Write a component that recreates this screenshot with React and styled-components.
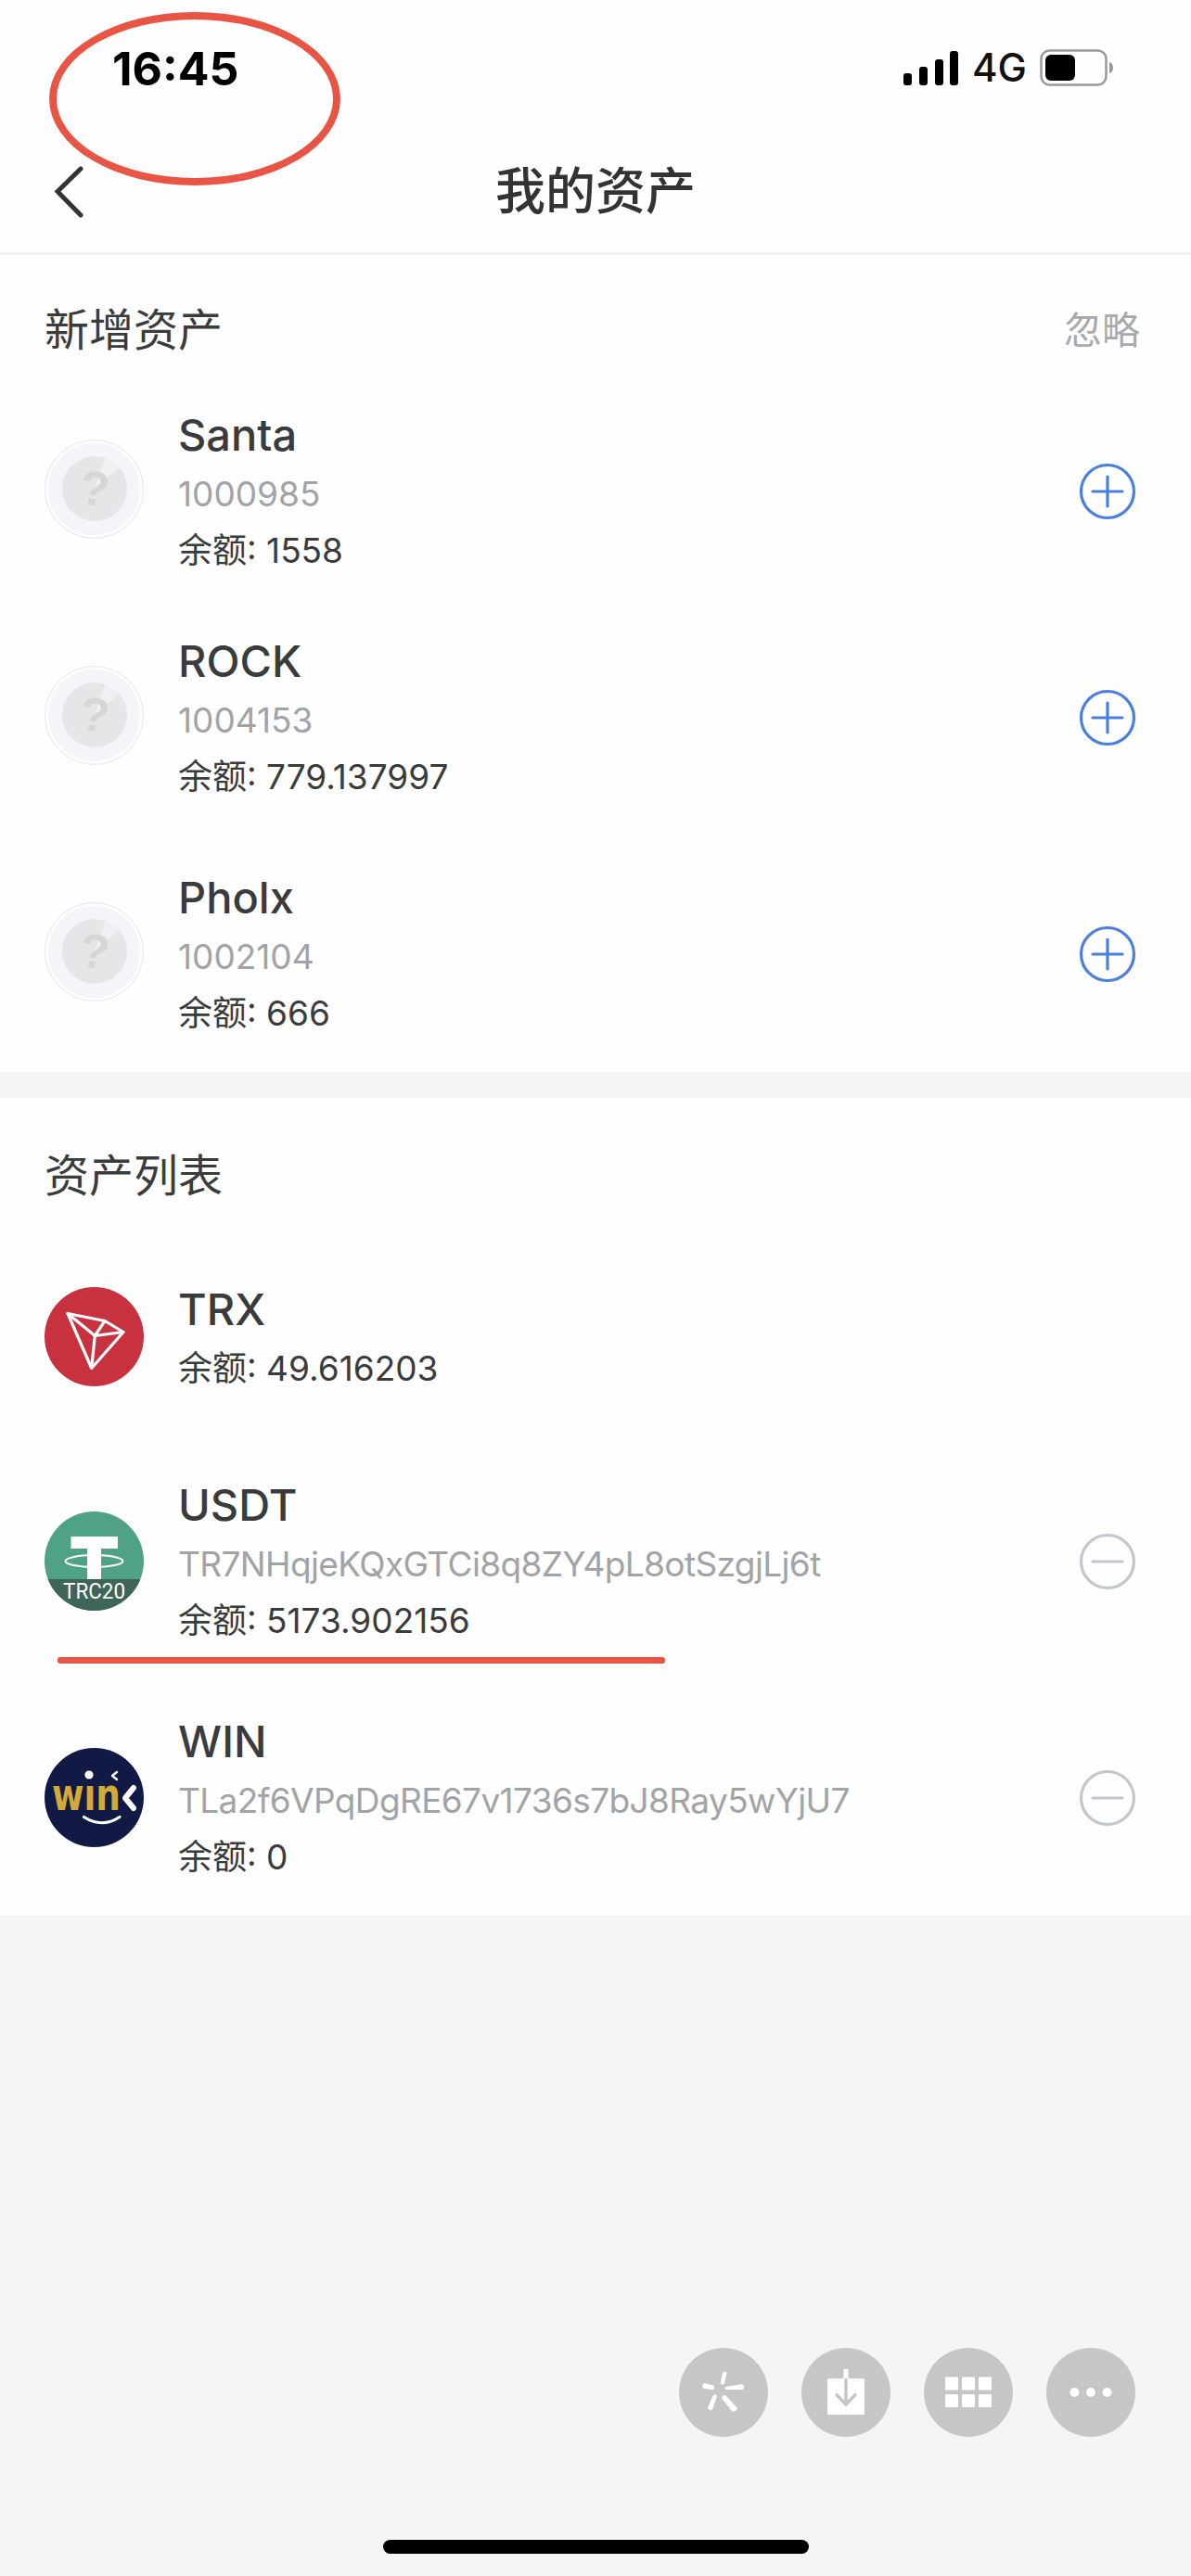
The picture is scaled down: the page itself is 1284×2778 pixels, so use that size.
import styled, { createGlobalStyle } from "styled-components";

const colors = {
  page: "#f5f5f5",
  panel: "#fefefe",
  text: "#3a3b3d",
  muted: "#a2a3a7",
  blue: "#4a7fe0",
  grey: "#c3c7cc",
  mark: "#e85545",
  fab: "#c6c6c6",
};

const GlobalStyle = createGlobalStyle`
  html, body {
    margin: 0;
    padding: 0;
    background: ${colors.page};
  }
  body {
    font-family: Inter, "Noto Sans CJK SC", sans-serif;
  }
`;

const newAssets = [
  { name: "Santa", id: "1000985", balance: "1558", gap: 0 },
  { name: "ROCK", id: "1004153", balance: "779.137997", gap: 64 },
  { name: "Pholx", id: "1002104", balance: "666", gap: 75 },
];

const PlusIcon = () => (
  <svg width="62" height="62" viewBox="0 0 62 62">
    <circle cx="31" cy="31" r="28.5" fill="none" stroke={colors.blue} strokeWidth="3.2" />
    <path d="M15 31H47M31 15V47" stroke={colors.blue} strokeWidth="3.2" strokeLinecap="round" />
  </svg>
);

const MinusIcon = () => (
  <svg width="62" height="62" viewBox="0 0 62 62">
    <circle cx="31" cy="31" r="28.5" fill="none" stroke={colors.grey} strokeWidth="3.2" />
    <path d="M15 31H47" stroke={colors.grey} strokeWidth="3.2" strokeLinecap="round" />
  </svg>
);

const UnknownToken = () => (
  <UnknownOuter>
    <UnknownInner>
      <UnknownMark>?</UnknownMark>
    </UnknownInner>
  </UnknownOuter>
);

const TrxLogo = () => (
  <svg width="107" height="107" viewBox="0 0 107 107">
    <circle cx="53.5" cy="53.5" r="53.5" fill="#c8323f" />
    <g fill="none" stroke="#fff" strokeWidth="3.2" strokeLinejoin="round" strokeLinecap="round">
      <path d="M25 28.5L65 36.5L85 48.5L50.7 87.5Z" />
      <path d="M25 28.5L54.3 52.5L50.7 87.5" />
      <path d="M54.3 52.5L65 36.5M54.3 52.5L85 48.5" />
    </g>
  </svg>
);

const UsdtLogo = () => (
  <svg width="107" height="107" viewBox="0 0 107 107">
    <defs>
      <clipPath id="usdt-disc">
        <circle cx="53.5" cy="53.5" r="53.5" />
      </clipPath>
    </defs>
    <g clipPath="url(#usdt-disc)">
      <rect width="107" height="107" fill="#4fa283" />
      <path d="M28.5 27H79V40H61V73H46V40H28.5Z" fill="#fff" />
      <ellipse cx="53.5" cy="53.5" rx="31" ry="6.5" fill="none" stroke="#fff" strokeWidth="2" />
      <rect y="73" width="107" height="34" fill="#3f6558" />
    </g>
    <text
      x="53.5"
      y="93.5"
      fill="#fff"
      fontFamily="Roboto, sans-serif"
      fontSize="24"
      textAnchor="middle"
      textLength="67"
      lengthAdjust="spacingAndGlyphs"
    >
      TRC20
    </text>
  </svg>
);

const WinLogo = () => (
  <svg width="107" height="107" viewBox="0 0 107 107">
    <circle cx="53.5" cy="53.5" r="53.5" fill="#111a44" />
    <text
      x="8"
      y="66.5"
      fill="#d3a93c"
      fontFamily="'DejaVu Sans', sans-serif"
      fontWeight="700"
      fontSize="48"
      textLength="74"
      lengthAdjust="spacingAndGlyphs"
    >
      wın
    </text>
    <circle cx="48" cy="29" r="4.6" fill="#fff" />
    <g fill="none" stroke="#fff" strokeLinecap="round" strokeLinejoin="round">
      <path d="M78 26L73 30L78 34" strokeWidth="2.4" />
      <path d="M96 43L87 54L96 65" strokeWidth="6" />
      <path d="M42.5 74.5Q62 87 81 74.5" strokeWidth="3.2" />
    </g>
  </svg>
);

const SparkIcon = () => (
  <svg width="56" height="56" viewBox="-28 -28 56 56">
    <g fill="#fff">
      <path d="M-3.2 -9.5L-1 -21Q1 -24 3.6 -21L1 -9.5Q-1 -7.5 -3.2 -9.5Z" />
      <path d="M2 -6L20 -9Q24 -6 20.5 -3L3 -3Q0.5 -4.5 2 -6Z" />
      <path d="M-21 -10Q-24 -6.5 -21 -4L-11 -2.8Q-8.5 -5 -11 -7.5Z" />
      <path d="M-8.5 2Q-11 2 -11.5 4L-17 16Q-16 20.5 -12 18.5L-7 4Q-7 2.5 -8.5 2Z" />
      <path d="M-0.5 3.5Q-2.5 5 -1.5 7L9.5 20.5Q14 21 15 17L2.5 3.5Q1 2.5 -0.5 3.5Z" />
    </g>
  </svg>
);

const InboxIcon = () => (
  <svg width="56" height="56" viewBox="-28 -28 56 56">
    <rect x="-20" y="-15" width="40" height="39" rx="1.5" fill="#fff" />
    <rect x="-2.5" y="-25" width="5" height="10" fill="#fff" />
    <path d="M0 -15V12M-11 1.5L0 13L11 1.5" fill="none" stroke={colors.fab} strokeWidth="3.4" />
  </svg>
);

const GridIcon = () => (
  <svg width="56" height="56" viewBox="-28 -28 56 56" fill="#fff">
    {[-25, -7, 11].map((x) =>
      [-16.5, 2].map((y) => <rect key={`${x}${y}`} x={x} y={y} width="14" height="14" rx="0.8" />)
    )}
  </svg>
);

const DotsIcon = () => (
  <svg width="56" height="56" viewBox="-28 -28 56 56" fill="#fff">
    <circle cx="-17.5" r="5" />
    <circle r="5" />
    <circle cx="17.5" r="5" />
  </svg>
);

const AssetRow = ({ gap = 0, lift = 6, logo, name, id, balance, action, address }) => (
  <Row $gap={gap}>
    <LogoSlot $lift={lift}>{logo}</LogoSlot>
    <RowText>
      <AssetName>{name}</AssetName>
      {id && <AssetId $address={address}>{id}</AssetId>}
      <AssetBalance>余额: {balance}</AssetBalance>
    </RowText>
    {action && <ActionSlot>{action}</ActionSlot>}
  </Row>
);

const App = () => (
  <Screen>
    <GlobalStyle />
    <StatusBar>
      <Clock>16:45</Clock>
      <StatusRight>
        <svg width="60" height="37" viewBox="0 0 60 37" fill="#000">
          <rect x="0" y="24" width="9" height="13" rx="3" />
          <rect x="17" y="17" width="9" height="20" rx="3" />
          <rect x="34" y="9" width="9" height="28" rx="3" />
          <rect x="50" y="0" width="9" height="37" rx="3" />
        </svg>
        <Network>4G</Network>
        <svg width="80" height="40" viewBox="0 0 80 40">
          <rect x="1.5" y="1.5" width="70" height="37" rx="9" fill="none" stroke="#999" strokeWidth="2.5" />
          <rect x="6" y="6" width="32" height="28" rx="6" fill="#000" />
          <path d="M75 14Q79 15 79 20Q79 25 75 26Z" fill="#999" />
        </svg>
      </StatusRight>
    </StatusBar>

    <NavBar>
      <BackButton>
        <svg width="32" height="56" viewBox="0 0 32 56">
          <path d="M28 3L3 27.5L28 53" fill="none" stroke="#333" strokeWidth="5" strokeLinecap="round" />
        </svg>
      </BackButton>
      <NavTitle>我的资产</NavTitle>
    </NavBar>

    <Panel $paddingBottom={37}>
      <PanelHeader $top={51}>
        <PanelTitle>新增资产</PanelTitle>
        <IgnoreLink>忽略</IgnoreLink>
      </PanelHeader>
      {newAssets.map((asset) => (
        <AssetRow key={asset.id} {...asset} logo={<UnknownToken />} action={<PlusIcon />} />
      ))}
    </Panel>

    <Panel $marginTop={28} $paddingBottom={36}>
      <PanelHeader $top={54} $height={168}>
        <PanelTitle>资产列表</PanelTitle>
      </PanelHeader>
      <AssetRow lift={1} logo={<TrxLogo />} name="TRX" balance="49.616203" />
      <AssetRow
        gap={62}
        lift={1}
        logo={<UsdtLogo />}
        name="USDT"
        id="TR7NHqjeKQxGTCi8q8ZY4pL8otSzgjLj6t"
        address
        balance="5173.902156"
        action={<MinusIcon />}
      />
      <AssetRow
        gap={75}
        lift={1}
        logo={<WinLogo />}
        name="WIN"
        id="TLa2f6VPqDgRE67v1736s7bJ8Ray5wYjU7"
        address
        balance="0"
        action={<MinusIcon />}
      />
    </Panel>

    <FabBar>
      <Fab><SparkIcon /></Fab>
      <Fab><InboxIcon /></Fab>
      <Fab><GridIcon /></Fab>
      <Fab><DotsIcon /></Fab>
    </FabBar>

    <HomeIndicator />

    <TimeCircle />
    <AmountUnderline />
  </Screen>
);

const Screen = styled.div`
  position: relative;
  width: 1284px;
  height: 2778px;
  overflow: hidden;
  display: flex;
  flex-direction: column;
  background: ${colors.page};
  color: ${colors.text};
`;

const StatusBar = styled.div`
  height: 110px;
  padding: 50px 83px 0 121px;
  box-sizing: border-box;
  display: flex;
  justify-content: space-between;
  align-items: flex-start;
  background: ${colors.panel};
`;

const Clock = styled.div`
  font-size: 50px;
  font-weight: 700;
  line-height: 48px;
  color: #000;
`;

const StatusRight = styled.div`
  display: flex;
  align-items: center;
  gap: 14px;
  margin-top: 3px;
`;

const Network = styled.span`
  font-size: 42px;
  font-weight: 500;
  line-height: 40px;
  color: #111;
`;

const NavBar = styled.div`
  position: relative;
  height: 165px;
  display: flex;
  align-items: center;
  justify-content: center;
  padding-top: 32px;
  box-sizing: border-box;
  background: ${colors.panel};
  border-bottom: 3px solid #f0f0f0;
`;

const BackButton = styled.div`
  position: absolute;
  left: 59px;
  top: 69px;
  line-height: 0;
`;

const NavTitle = styled.h1`
  margin: 0;
  font-size: 54px;
  font-weight: 500;
  line-height: 60px;
  color: #333;
`;

const Panel = styled.section`
  background: ${colors.panel};
  margin-top: ${(p) => p.$marginTop || 0}px;
  padding-bottom: ${(p) => p.$paddingBottom}px;
`;

const PanelHeader = styled.div`
  height: ${(p) => p.$height || 165}px;
  padding: ${(p) => p.$top}px 55px 0 48px;
  display: flex;
  justify-content: space-between;
  align-items: flex-start;
  box-sizing: border-box;
`;

const PanelTitle = styled.h2`
  margin: 0;
  font-size: 48px;
  font-weight: 400;
  line-height: 60px;
  color: ${colors.text};
`;

const IgnoreLink = styled.span`
  font-size: 41px;
  line-height: 60px;
  color: #a8a9ad;
`;

const Row = styled.div`
  height: 180px;
  margin-top: ${(p) => p.$gap}px;
  padding: 0 59px 0 48px;
  display: flex;
  align-items: center;
`;

const LogoSlot = styled.div`
  width: 107px;
  height: 107px;
  margin-bottom: ${(p) => p.$lift}px;
  flex-shrink: 0;
  line-height: 0;
`;

const RowText = styled.div`
  margin-left: 37px;
  flex: 1;
  min-width: 0;
`;

const AssetName = styled.div`
  font-size: 47px;
  font-weight: 500;
  line-height: 66px;
  color: ${colors.text};
`;

const AssetId = styled.div`
  font-size: 37px;
  line-height: 61px;
  letter-spacing: ${(p) => (p.$address ? "-0.62px" : "0")};
  color: ${colors.muted};
`;

const AssetBalance = styled.div`
  font-size: 37px;
  line-height: 61px;
  color: ${colors.text};
`;

const ActionSlot = styled.div`
  width: 62px;
  height: 62px;
  flex-shrink: 0;
  line-height: 0;
`;

const UnknownOuter = styled.div`
  width: 107px;
  height: 107px;
  box-sizing: border-box;
  border-radius: 50%;
  border: 1px solid #e8e8ec;
  background: #f4f4f9;
  box-shadow: inset 0 0 0 3px #fdfdfe;
  display: flex;
  align-items: center;
  justify-content: center;
`;

/* disc with a lighter sheen wedge towards the top right */
const UnknownInner = styled.div`
  width: 70px;
  height: 70px;
  border-radius: 50%;
  background: conic-gradient(#e6e6e9 0 18deg, #f0f0f3 20deg 48deg, #e6e6e9 50deg);
  display: flex;
  align-items: center;
  justify-content: center;
`;

const UnknownMark = styled.span`
  color: #d6d6d9;
  font-family: "Liberation Sans", sans-serif;
  font-size: 52px;
  font-weight: 700;
  line-height: 70px;
  transform: rotate(8deg);
`;

const FabBar = styled.div`
  position: absolute;
  right: 60px;
  top: 2532px;
  display: flex;
  gap: 36px;
`;

const Fab = styled.div`
  width: 96px;
  height: 96px;
  border-radius: 50%;
  background: ${colors.fab};
  display: flex;
  align-items: center;
  justify-content: center;
`;

const HomeIndicator = styled.div`
  position: absolute;
  left: 413px;
  top: 2739px;
  width: 459px;
  height: 15px;
  border-radius: 8px;
  background: #000;
`;

const TimeCircle = styled.div`
  position: absolute;
  left: 53px;
  top: 13px;
  width: 314px;
  height: 187px;
  box-sizing: border-box;
  border: 8px solid ${colors.mark};
  border-radius: 50%;
`;

const AmountUnderline = styled.div`
  position: absolute;
  left: 62px;
  top: 1787px;
  width: 655px;
  height: 7px;
  border-radius: 3px;
  background: ${colors.mark};
`;

export default App;
